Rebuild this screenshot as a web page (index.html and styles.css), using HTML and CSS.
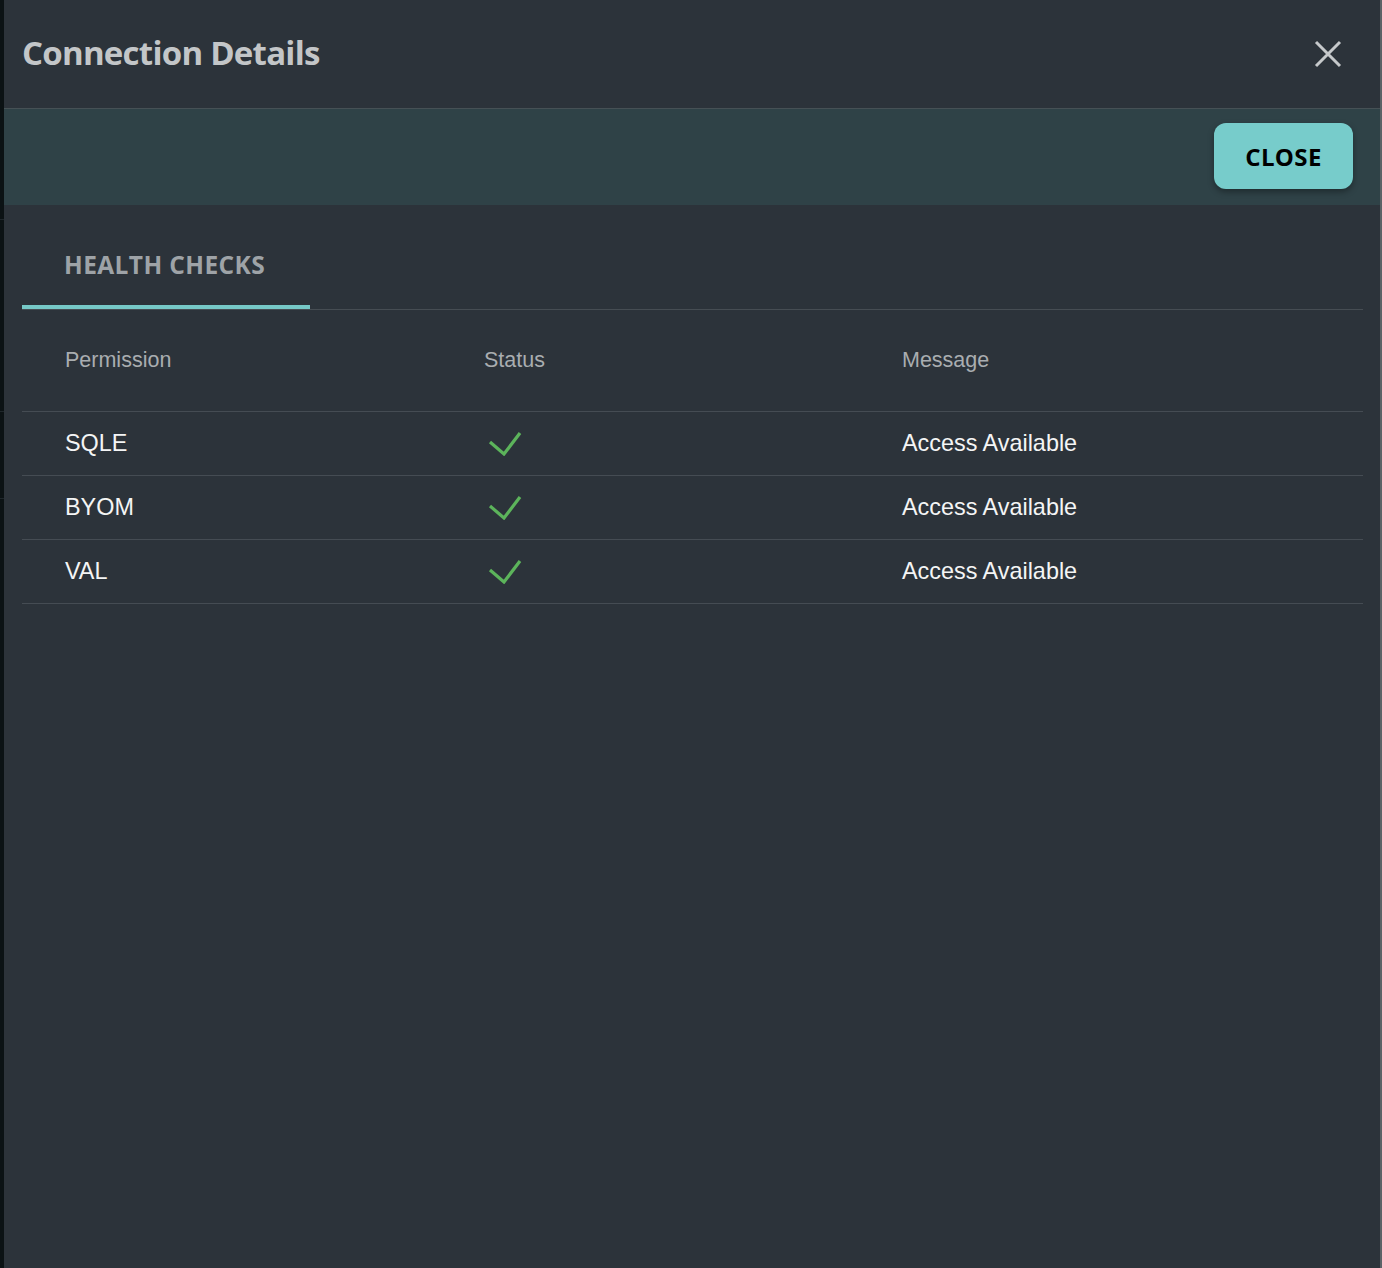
FILE: index.html
```html
<!DOCTYPE html>
<html lang="en">
<head>
<meta charset="utf-8">
<title>Connection Details</title>
<link rel="stylesheet" href="styles.css">
</head>
<body>
<div class="dialog">
  <header class="dialog-header">
    <h1 class="dialog-title">Connection Details</h1>
    <button class="icon-close" aria-label="Close">
      <svg width="28" height="28" viewBox="0 0 28 28"><path d="M2 2 L26 26 M26 2 L2 26" stroke="#c6c9cb" stroke-width="3" stroke-linecap="butt" fill="none"/></svg>
    </button>
  </header>
  <div class="action-band">
    <button class="btn-close">CLOSE</button>
  </div>
  <div class="content">
    <div class="tabs">
      <div class="tab active">HEALTH CHECKS</div>
    </div>
    <div class="table">
      <div class="row head">
        <div class="cell">Permission</div>
        <div class="cell">Status</div>
        <div class="cell">Message</div>
      </div>
      <div class="row">
        <div class="cell">SQLE</div>
        <div class="cell"><svg class="check" width="34" height="26" viewBox="0 0 34 26"><path d="M2 12 L16 24 L32 3" stroke="#5cb45b" stroke-width="3.2" fill="none"/></svg></div>
        <div class="cell">Access Available</div>
      </div>
      <div class="row">
        <div class="cell">BYOM</div>
        <div class="cell"><svg class="check" width="34" height="26" viewBox="0 0 34 26"><path d="M2 12 L16 24 L32 3" stroke="#5cb45b" stroke-width="3.2" fill="none"/></svg></div>
        <div class="cell">Access Available</div>
      </div>
      <div class="row">
        <div class="cell">VAL</div>
        <div class="cell"><svg class="check" width="34" height="26" viewBox="0 0 34 26"><path d="M2 12 L16 24 L32 3" stroke="#5cb45b" stroke-width="3.2" fill="none"/></svg></div>
        <div class="cell">Access Available</div>
      </div>
    </div>
  </div>
</div>
</body>
</html>
```
FILE: styles.css
```css
html, body {
  margin: 0;
  padding: 0;
}
body {
  background-color: #0b1214;
  background-image:
    linear-gradient(#1f272b, #1f272b),
    linear-gradient(#1f272b, #1f272b),
    linear-gradient(#1f272b, #1f272b);
  background-size: 4px 1px, 4px 1px, 4px 1px;
  background-position: 0 219px, 0 411px, 0 498px;
  background-repeat: no-repeat;
  height: 1268px;
  overflow: hidden;
  display: flex;
}
.dialog {
  margin-left: 4px;
  width: 1376px;
  border-right: 2px solid #5b6267;
  background: #2c333a;
  min-height: 1268px;
  display: flex;
  flex-direction: column;
}
.dialog-header {
  height: 108px;
  border-bottom: 1px solid #465155;
  display: flex;
  align-items: center;
  justify-content: space-between;
  padding: 0 38px 0 18px;
}
.dialog-title {
  margin: 0 0 3px 0;
  font-family: "Open Sans", "DejaVu Sans", sans-serif;
  font-weight: 700;
  font-size: 33px;
  letter-spacing: -0.75px;
  color: #c3c6c8;
  line-height: 1;
}
.icon-close {
  background: none;
  border: 0;
  padding: 0;
  width: 28px;
  height: 28px;
  display: flex;
}
.action-band {
  height: 96px;
  background: #2f4247;
  display: flex;
  justify-content: flex-end;
  align-items: center;
  padding-right: 27px;
}
.btn-close {
  width: 139px;
  height: 66px;
  border: 0;
  border-radius: 12px;
  background: #77cccb;
  color: #000;
  font-family: "Open Sans", "DejaVu Sans", sans-serif;
  font-weight: 700;
  font-size: 24px;
  letter-spacing: 0.4px;
  box-shadow: 0 3px 6px rgba(0, 0, 0, 0.35);
  padding: 0;
  margin-bottom: 2px;
}
.content {
  padding: 0 17px 0 18px;
}
.tabs {
  height: 104px;
  border-bottom: 1px solid #464d53;
  display: flex;
}
.tab {
  position: relative;
  width: 288px;
  box-sizing: border-box;
  padding-left: 42px;
  display: flex;
  align-items: center;
  font-family: "Open Sans", "DejaVu Sans", sans-serif;
  font-weight: 700;
  font-size: 24.5px;
  letter-spacing: 0.4px;
  color: #9ea3a7;
  padding-top: 15px;
}
.tab.active::after {
  content: "";
  position: absolute;
  left: 0;
  right: 0;
  bottom: 0;
  height: 4px;
  background: #76c9c7;
}
.table {
  font-family: "Liberation Sans", Arial, sans-serif;
}
.row {
  display: grid;
  grid-template-columns: 419px 418px 1fr;
  height: 63px;
  border-bottom: 1px solid #454c53;
  align-items: center;
  font-size: 23.4px;
  color: #f4f5f5;
}
.row.head {
  height: 101px;
  font-size: 21.5px;
  color: #a9adb0;
}
.cell {
  padding-left: 43px;
  display: flex;
  align-items: center;
}
.check {
  margin-left: 4px;
  margin-top: -2px;
}
```
